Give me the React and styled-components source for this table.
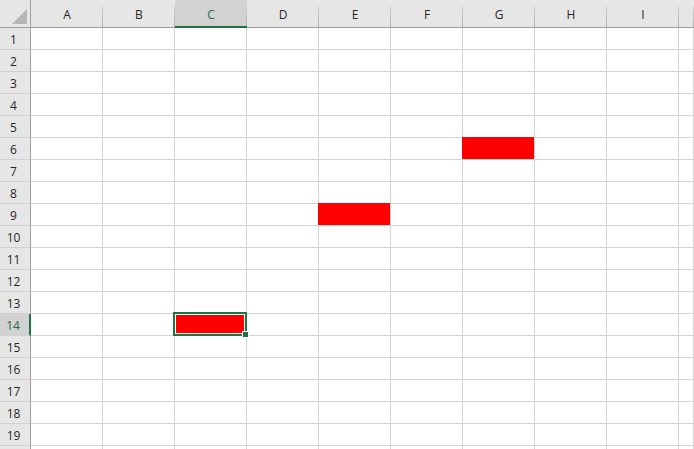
import React from 'react'
import styled, { createGlobalStyle } from 'styled-components'

const GlobalStyle = createGlobalStyle`
  html, body {
    margin: 0;
    padding: 0;
    background: #ffffff;
    overflow: hidden;
  }
  * { box-sizing: border-box; }
`

const COLS = ['A', 'B', 'C', 'D', 'E', 'F', 'G', 'H', 'I', '']
const ROWS = 20

// which cells are filled red: "col-row"
const filled = { 'G-6': true, 'E-9': true, 'C-14': true }
const active = { col: 'C', row: 14 }

const Sheet = styled.div`
  display: grid;
  grid-template-columns: 31px repeat(9, 72px) 1fr;
  grid-template-rows: 28px repeat(${ROWS}, 22px);
  width: 694px;
  height: 449px;
  overflow: hidden;
  font-family: "Open Sans", "Noto Sans", "Liberation Sans", sans-serif;
  font-size: 12px;
  color: #262626;
`

const Corner = styled.div`
  position: relative;
  background: #e6e6e6;
  border-right: 1px solid #9e9e9e;
  border-bottom: 1px solid #9e9e9e;

  &::after {
    content: '';
    position: absolute;
    right: 3px;
    bottom: 3px;
    width: 0;
    height: 0;
    border-left: 15px solid transparent;
    border-bottom: 15px solid #b5b5b5;
  }
`

const ColHead = styled.div`
  position: relative;
  display: flex;
  align-items: center;
  justify-content: center;
  padding-top: 2px;
  background: ${p => (p.$active ? '#d2d2d2' : '#e6e6e6')};
  color: ${p => (p.$active ? '#1d6b3f' : '#262626')};
  border-bottom: ${p => (p.$active ? '2px solid #217346' : '1px solid #9e9e9e')};

  &::after {
    content: '';
    position: absolute;
    right: 0;
    top: 6px;
    bottom: 0;
    width: 1px;
    background: linear-gradient(#d4d4d4, #ababab);
  }
`

const RowHead = styled.div`
  display: flex;
  align-items: center;
  justify-content: center;
  padding-right: 3px;
  padding-top: 2px;
  background: ${p => (p.$active ? '#d2d2d2' : '#e6e6e6')};
  color: ${p => (p.$active ? '#1d6b3f' : '#262626')};
  border-right: ${p => (p.$active ? '2px solid #217346' : '1px solid #9e9e9e')};
  border-bottom: 1px solid #d0d0d0;
`

const Cell = styled.div`
  position: relative;
  background: ${p => (p.$fill ? '#ff0000' : '#ffffff')};
  border-right: 1px solid #d4d4d4;
  border-bottom: 1px solid #d4d4d4;
  box-shadow: ${p => (p.$fill && !p.$active ? '-1px -1px 0 0 #ff0000' : 'none')};
`

const Selection = styled.div`
  position: absolute;
  top: -2px;
  left: -2px;
  right: -1px;
  bottom: -1px;
  z-index: 2;
  border: 2px solid #217346;
  box-shadow: inset 0 0 0 1px #ffffff;
`

const Handle = styled.div`
  position: absolute;
  right: -4px;
  bottom: -4px;
  width: 7px;
  height: 7px;
  background: #217346;
  border: 1px solid #ffffff;
`

export default function App() {
  const rows = []
  for (let r = 1; r <= ROWS; r++) {
    rows.push(
      <RowHead key={`h${r}`} $active={r === active.row}>{r}</RowHead>
    )
    COLS.forEach(c => {
      const isActive = c === active.col && r === active.row
      rows.push(
        <Cell key={`${c}${r}`} $fill={filled[`${c}-${r}`]} $active={isActive}>
          {isActive && (
            <Selection>
              <Handle />
            </Selection>
          )}
        </Cell>
      )
    })
  }

  return (
    <>
      <GlobalStyle />
      <Sheet>
        <Corner />
        {COLS.map(c => (
          <ColHead key={c || 'J'} $active={c === active.col}>{c}</ColHead>
        ))}
        {rows}
      </Sheet>
    </>
  )
}
